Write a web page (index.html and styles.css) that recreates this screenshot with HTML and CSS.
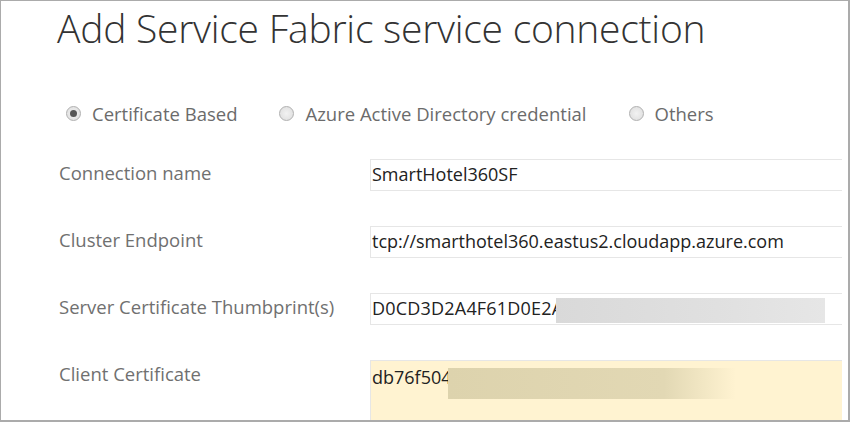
FILE: index.html
```html
<!DOCTYPE html>
<html>
<head>
<meta charset="utf-8">
<link rel="stylesheet" href="styles.css">
</head>
<body>
<div class="frame">
  <h1 class="title">Add Service Fabric service connection</h1>
  <div class="radios">
    <label class="radio"><span class="dot checked"></span><span class="rtext">Certificate Based</span></label>
    <label class="radio"><span class="dot"></span><span class="rtext">Azure Active Directory credential</span></label>
    <label class="radio"><span class="dot"></span><span class="rtext">Others</span></label>
  </div>
  <div class="form">
    <div class="label">Connection name</div>
    <div class="input">SmartHotel360SF</div>
    <div class="label">Cluster Endpoint</div>
    <div class="input">tcp://smarthotel360.eastus2.cloudapp.azure.com</div>
    <div class="label">Server Certificate Thumbprint(s)</div>
    <div class="input"><span class="wide">D0CD3D2A4F61D0E2A</span><span class="blur gray"></span></div>
    <div class="label">Client Certificate</div>
    <div class="input area">db76f504<span class="blur tan"></span></div>
  </div>
</div>
</body>
</html>
```

FILE: styles.css
```css
* { box-sizing: border-box; }
html, body { margin: 0; padding: 0; background: #fff; }
body { font-family: "Open Sans", "Noto Sans", sans-serif; }
.frame {
  width: 850px;
  height: 422px;
  border: 1px solid #ababab;
  border-right-width: 2px;
  border-bottom-width: 2px;
  overflow: hidden;
  padding: 0 0 0 56px;
}
.title {
  margin: 0;
  padding-top: 1px;
  font-size: 39px;
  font-weight: 300;
  line-height: 52px;
  color: #333;
  letter-spacing: -0.25px;
}
.radios {
  display: flex;
  align-items: center;
  margin-top: 49px;
  padding-left: 9px;
  height: 20px;
  gap: 42px;
}
.radio {
  display: flex;
  align-items: center;
  gap: 11px;
  color: #6b6b6b;
  font-size: 18.5px;
}
.dot {
  width: 15px;
  height: 15px;
  border-radius: 50%;
  border: 1px solid #b0b0b0;
  background: radial-gradient(circle, #f2f2f2 0%, #dcdcdc 100%);
  display: flex;
  align-items: center;
  justify-content: center;
}
.dot.checked::after {
  content: "";
  width: 7px;
  height: 7px;
  border-radius: 50%;
  background: #555;
}
.form {
  display: grid;
  grid-template-columns: 311px 472px;
  row-gap: 35px;
  margin-top: 36px;
  padding-left: 2px;
}
.label {
  color: #707070;
  font-size: 18.5px;
  line-height: 22px;
  padding-top: 3px;
  white-space: nowrap;
}
.input {
  height: 32px;
  border: 1px solid #e6e6e6;
  border-right: none;
  padding: 3px 0 0 1px;
  font-size: 18px;
  line-height: 22px;
  color: #222;
  white-space: nowrap;
  overflow: hidden;
}
.wide { letter-spacing: 0.2px; }
.input.area {
  height: 80px;
  background: #fff3d1;
  padding-top: 5px;
}
.blur {
  display: inline-block;
  vertical-align: top;
}
.blur.gray {
  width: 269px;
  height: 25px;
  margin-left: -7px;
  margin-top: 1px;
  background: linear-gradient(90deg, #d9d9d9, #e0e0e0 60%, #e6e6e6);
}
.blur.tan {
  width: 288px;
  height: 31px;
  margin-left: -4px;
  margin-top: 2px;
  background: linear-gradient(90deg, #ddd3ad, #e2d8b4 75%, #fff3d1);
}
```
